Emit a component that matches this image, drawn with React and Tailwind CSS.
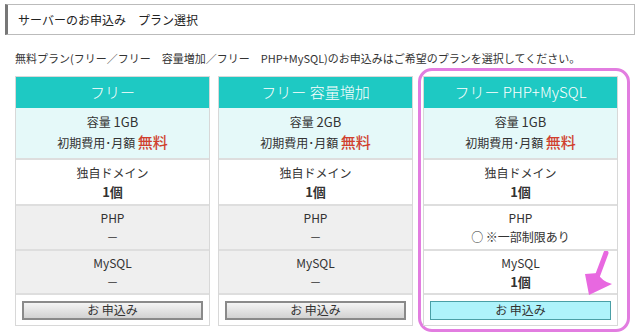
import React from "react";

const plans = [
  { name: "フリー", size: "1GB", php: null, mysql: null },
  { name: "フリー 容量増加", size: "2GB", php: null, mysql: null },
  { name: "フリー PHP+MySQL", size: "1GB", php: "○ ※一部制限あり", mysql: "1個", active: true },
];

function PlanColumn({ plan }) {
  const soft = plan.active ? "bg-white" : "bg-[#efefef]";
  return (
    <div className="w-[195px] border border-[#d8d8d8] bg-white text-[#333] text-center">
      <div className="h-[31px] bg-[#1ec9c3] text-white text-[15px] font-light flex items-center justify-center">
        {plan.name}
      </div>
      <div className="h-[52px] bg-[#e5f9f9] border-b-2 border-[#dedede] flex flex-col items-center justify-center gap-[3px]">
        <div className="text-[12px] leading-[16px]">
          容量 <span className="text-[13px]">{plan.size}</span>
        </div>
        <div className="text-[12px] leading-[18px]">
          初期費用･月額 <span className="text-[15px] font-medium text-[#d0402e]">無料</span>
        </div>
      </div>
      <div className="h-[46px] border-b-2 border-[#dedede] flex flex-col items-center justify-center gap-[3px]">
        <div className="text-[12px] leading-[16px]">独自ドメイン</div>
        <div className="text-[13px] font-bold leading-[16px]">1個</div>
      </div>
      <div className={`h-[45px] ${soft} border-b-2 border-[#dedede] flex flex-col items-center justify-center gap-[3px]`}>
        <div className="text-[12px] leading-[16px]">PHP</div>
        <div className="text-[12px] leading-[16px]">{plan.php || "－"}</div>
      </div>
      <div className={`h-[44px] ${soft} border-b-2 border-[#dedede] flex flex-col items-center justify-center gap-[3px]`}>
        <div className="text-[12px] leading-[16px]">MySQL</div>
        <div className={plan.mysql ? "text-[13px] font-bold leading-[16px]" : "text-[12px] leading-[16px]"}>
          {plan.mysql || "－"}
        </div>
      </div>
      <div className="h-[30px] flex items-center px-[6px]">
        <button
          className={`w-full h-[19px] text-[12px] leading-none text-[#333] ${
            plan.active
              ? "bg-[#aef3fb] border border-[#4a9fa6]"
              : "bg-gradient-to-b from-[#f4f4f4] to-[#d2d2d2] border-2 border-[#8a8a8a]"
          }`}
        >
          お 申込み
        </button>
      </div>
    </div>
  );
}

export default function App() {
  return (
    <div
      className="w-[640px] h-[333px] bg-white overflow-hidden pt-[4px] px-[5px]"
      style={{ fontFamily: '"Noto Sans CJK JP", "Liberation Sans", sans-serif' }}
    >
      <div className="h-[31px] border border-[#bbb] border-l-[3px] border-l-[#777] flex items-center pl-[10px] text-[12px] text-[#222]">
        サーバーのお申込み　プラン選択
      </div>

      <p className="mt-[15px] ml-[10px] text-[11px] leading-[16px] text-[#333]">
        無料プラン(フリー／フリー　容量増加／フリー　PHP+MySQL)のお申込みはご希望のプランを選択してください。
      </p>

      <div className="mt-[10px] ml-[10px] flex items-start">
        <PlanColumn plan={plans[0]} />
        <div className="ml-[8px]">
          <PlanColumn plan={plans[1]} />
        </div>
        <div className="relative ml-[5px] -mt-[8px] border-[3px] border-[#e27de0] rounded-[14px] pt-[5px] pl-[2px] pr-[9px] pb-[3px]">
          <PlanColumn plan={plans[2]} />
          {/* pink pointer toward the button */}
          <svg className="absolute left-[160px] top-[180px]" width="34" height="48" viewBox="0 0 34 48">
            <path d="M25 2 L16 26" stroke="#e868e0" strokeWidth="5" strokeLinecap="round" fill="none" />
            <path d="M4 23 L8 44 L31 33 Q20 30 17 22 Z" fill="#e868e0" />
          </svg>
        </div>
      </div>
    </div>
  );
}
